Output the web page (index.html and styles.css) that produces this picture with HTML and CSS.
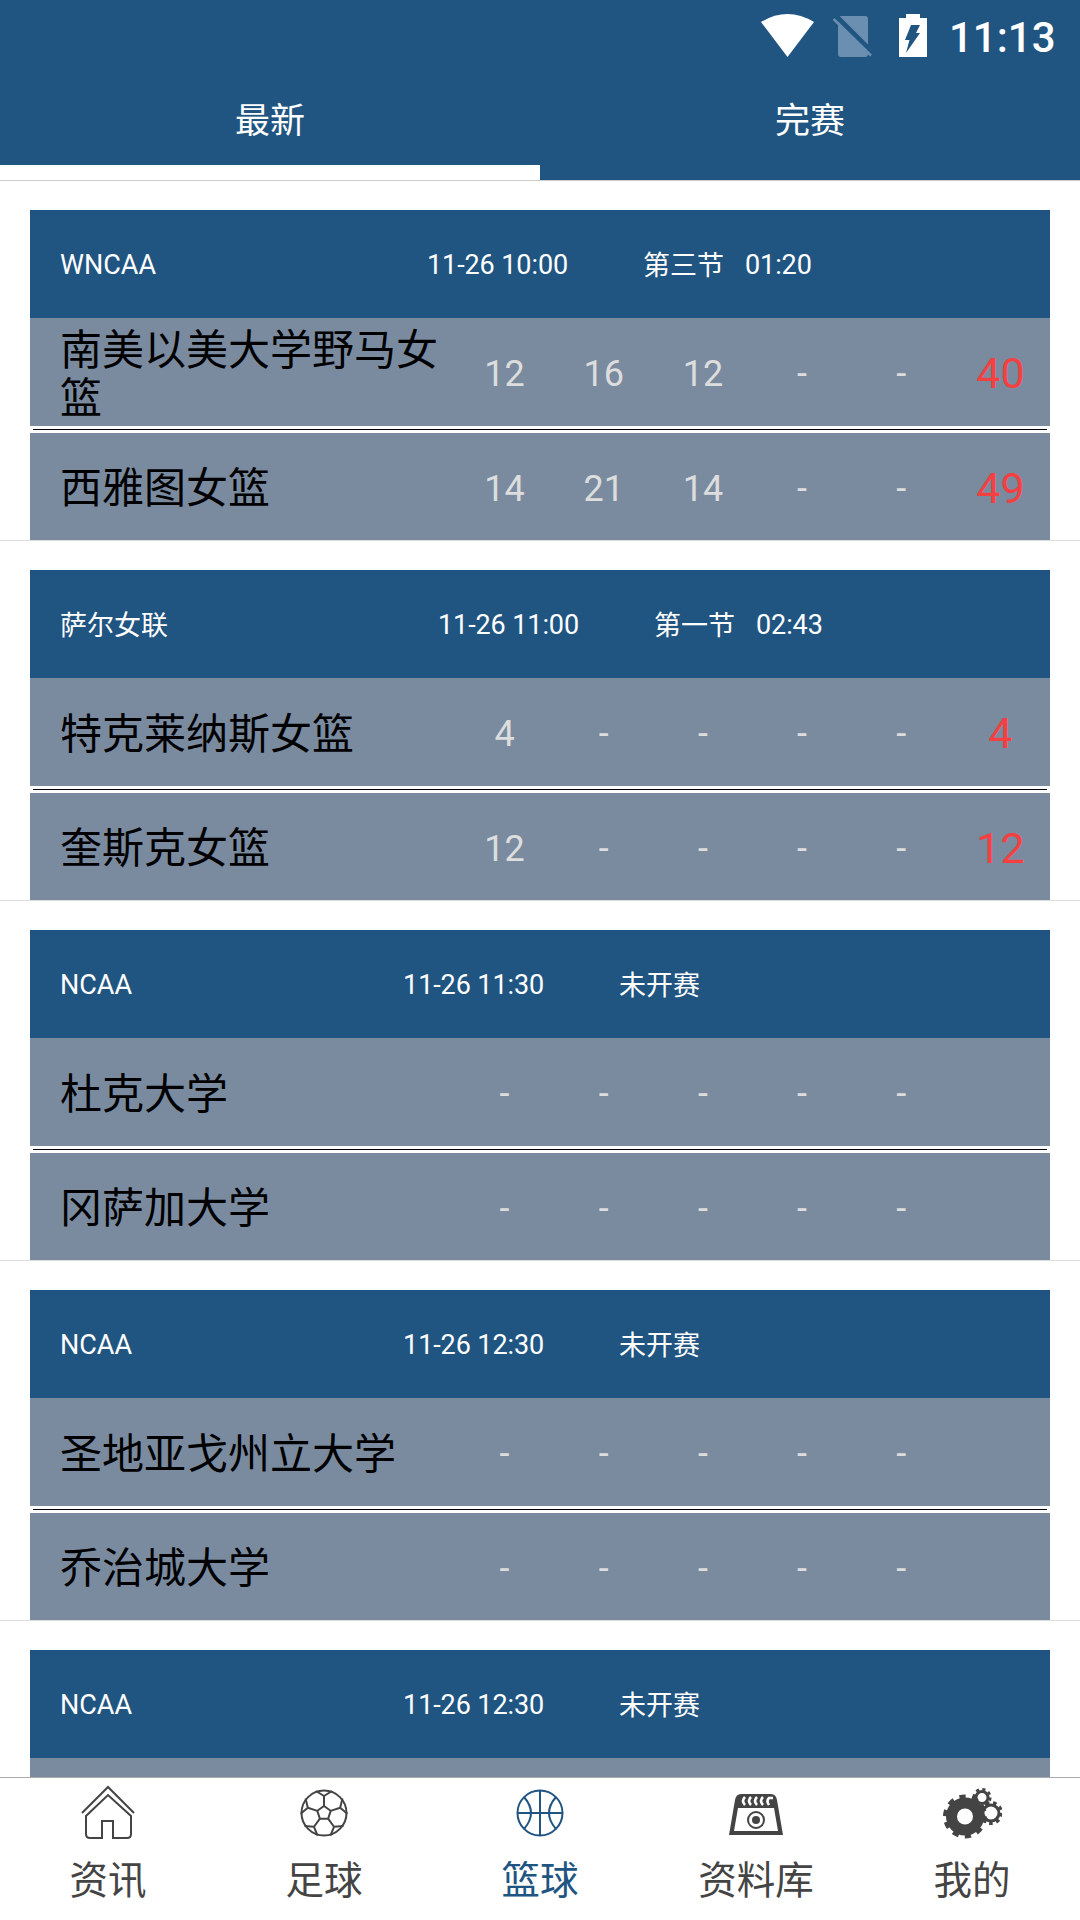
FILE: index.html
```html
<!DOCTYPE html>
<html lang="zh">
<head>
<meta charset="utf-8">
<title>篮球</title>
<link rel="stylesheet" href="styles.css">
</head>
<body>
<div class="page">
  <header class="top">
    <div class="status">
      <svg class="ic-wifi" width="53" height="43" viewBox="0 0 53 43"><path d="M0 8Q26.500-8 53 8L26.500 43Z" fill="#fff"/></svg>
      <svg class="ic-sim" width="39" height="41" viewBox="0 0 39 41"><path d="M5 3Q5 0 8 0H32Q35 0 35 3V38Q35 41 32 41H8Q5 41 5 38Z" fill="#6a8fb0"/><path d="M4 1L39 36" stroke="#215581" stroke-width="5"/><path d="M0.500 3L38 39.500" stroke="#6a8fb0" stroke-width="2.500"/></svg>
      <svg class="ic-bat" width="28" height="43" viewBox="0 0 28 43"><path d="M7 0H21V4H28V43H0V4H7Z" fill="#fff"/><path d="M12 11H21L17 19H21L7 39L10.500 26H6Z" fill="#215581"/></svg>
      <span class="clock">11:13</span>
    </div>
    <nav class="tabs">
      <div class="tab tab-on">最新</div>
      <div class="tab">完赛</div>
    </nav>
  </header>

  <main class="list">
    <section class="item">
      <div class="head"><span class="league">WNCAA</span><span class="time">11-26 10:00</span><span class="phase">第三节</span><span class="clk">01:20</span></div>
      <div class="row"><div class="team">南美以美大学野马女篮</div><span>12</span><span>16</span><span>12</span><span>-</span><span>-</span><span class="total">40</span></div>
      <div class="sep"></div>
      <div class="row row-b"><div class="team">西雅图女篮</div><span>14</span><span>21</span><span>14</span><span>-</span><span>-</span><span class="total">49</span></div>
    </section>
    <section class="item">
      <div class="head"><span class="league league-cjk">萨尔女联</span><span class="time">11-26 11:00</span><span class="phase">第一节</span><span class="clk">02:43</span></div>
      <div class="row"><div class="team">特克莱纳斯女篮</div><span>4</span><span>-</span><span>-</span><span>-</span><span>-</span><span class="total">4</span></div>
      <div class="sep"></div>
      <div class="row row-b"><div class="team">奎斯克女篮</div><span>12</span><span>-</span><span>-</span><span>-</span><span>-</span><span class="total">12</span></div>
    </section>
    <section class="item">
      <div class="head"><span class="league">NCAA</span><span class="time">11-26 11:30</span><span class="phase">未开赛</span></div>
      <div class="row"><div class="team">杜克大学</div><span>-</span><span>-</span><span>-</span><span>-</span><span>-</span><span class="total"></span></div>
      <div class="sep"></div>
      <div class="row row-b"><div class="team">冈萨加大学</div><span>-</span><span>-</span><span>-</span><span>-</span><span>-</span><span class="total"></span></div>
    </section>
    <section class="item">
      <div class="head"><span class="league">NCAA</span><span class="time">11-26 12:30</span><span class="phase">未开赛</span></div>
      <div class="row"><div class="team">圣地亚戈州立大学</div><span>-</span><span>-</span><span>-</span><span>-</span><span>-</span><span class="total"></span></div>
      <div class="sep"></div>
      <div class="row row-b"><div class="team">乔治城大学</div><span>-</span><span>-</span><span>-</span><span>-</span><span>-</span><span class="total"></span></div>
    </section>
    <section class="item">
      <div class="head"><span class="league">NCAA</span><span class="time">11-26 12:30</span><span class="phase">未开赛</span></div>
      <div class="row"></div>
    </section>
  </main>

  <footer class="bar">
    <div class="nav">
      <svg class="ico" viewBox="0 0 60 60"><path d="M4 30L30 4L56 30M8 33V51Q8 55 12 55H24V38H35V55H49Q53 55 53 51V33L30 12Z" fill="none" stroke="#444" stroke-width="2"/></svg>
      <span>资讯</span>
    </div>
    <div class="nav">
      <svg class="ico" viewBox="0 0 60 60">
        <defs><path id="spoke" d="M30 23V13M30 13L22 8M30 13L38 8" fill="none" stroke="#444" stroke-width="2"/></defs>
        <circle cx="30" cy="30" r="22.500" fill="none" stroke="#444" stroke-width="2"/>
        <path d="M30 23L36.700 27.800L34.100 35.700H25.900L23.300 27.800Z" fill="none" stroke="#444" stroke-width="2"/>
        <use href="#spoke"/><use href="#spoke" transform="rotate(72 30 30)"/><use href="#spoke" transform="rotate(144 30 30)"/><use href="#spoke" transform="rotate(216 30 30)"/><use href="#spoke" transform="rotate(288 30 30)"/>
      </svg>
      <span>足球</span>
    </div>
    <div class="nav nav-on">
      <svg class="ico" viewBox="0 0 60 60"><g fill="none" stroke="#215581" stroke-width="2"><circle cx="30" cy="30" r="22.500"/><path d="M30 7.500V52.500M7.500 30H52.500M14 14Q28 30 14 46M46 14Q32 30 46 46"/></g></svg>
      <span>篮球</span>
    </div>
    <div class="nav">
      <svg class="ico" viewBox="0 0 60 60">
        <path d="M3 52L9 17Q10 11 15 11H45Q50 11 51 17L57 52Z" fill="#444"/>
        <path d="M8 48L12 25H48L52 48Z" fill="#fff"/>
        <path d="M19 14Q15 18 19 22M25 14Q21 18 25 22M31 14Q27 18 31 22M37 14Q33 18 37 22M47 15H43Q40 18 43 22" fill="none" stroke="#fff" stroke-width="2.600"/>
        <circle cx="30" cy="37" r="8" fill="none" stroke="#444" stroke-width="2"/>
        <circle cx="30" cy="37" r="4" fill="#444"/>
      </svg>
      <span>资料库</span>
    </div>
    <div class="nav">
      <svg class="ico" viewBox="0 0 60 60"><g fill="none" stroke="#444">
        <circle cx="23" cy="33.500" r="13.500" stroke-width="11"/>
        <circle cx="23" cy="33.500" r="19.500" stroke-width="5" stroke-dasharray="6.130 6.130"/>
        <circle cx="49" cy="30" r="8" stroke-width="3"/>
        <circle cx="49" cy="30" r="10.500" stroke-width="3" stroke-dasharray="3.660 3.660"/>
        <circle cx="40" cy="14.500" r="6" stroke-width="3"/>
        <circle cx="40" cy="14.500" r="8.300" stroke-width="2.500" stroke-dasharray="3.260 3.260"/>
      </g></svg>
      <span>我的</span>
    </div>
  </footer>
</div>
</body>
</html>
```

FILE: styles.css
```css
* { box-sizing: border-box; margin: 0; padding: 0; }
html, body { background: #fff; }
body { font-family: Roboto, "Noto Sans CJK SC", sans-serif; }

.page {
  width: 1080px;
  height: 1920px;
  display: flex;
  flex-direction: column;
  overflow: hidden;
}

.top {
  height: 180px;
  flex: none;
  background: #215581;
  color: #fff;
  display: flex;
  flex-direction: column;
}

.status {
  height: 72px;
  flex: none;
  display: flex;
  align-items: flex-start;
  padding-top: 14px;
  padding-left: 761px;
}
.ic-sim { margin-left: 19px; margin-top: 2px; }
.ic-bat { margin-left: 27px; }
.clock { margin-left: 22px; font-size: 42px; font-weight: 500; line-height: 48px; }

.tabs { flex: 1; display: flex; }
.tab {
  flex: 1;
  text-align: center;
  font-family: "Noto Sans CJK SC", sans-serif;
  font-size: 35px;
  padding-top: 22px;
  line-height: 48px;
  border-bottom: 15px solid transparent;
}
.tab-on { border-bottom-color: #fff; }

.list {
  flex: 1;
  min-height: 0;
  overflow: hidden;
  border-top: 1px solid #ccc;
}

.item {
  padding: 29px 30px 0;
  height: 360px;
  border-bottom: 1px solid #ddd;
}

.head {
  height: 108px;
  background: #215581;
  color: #fff;
  display: flex;
  align-items: center;
  padding-left: 30px;
  padding-top: 1px;
  font-size: 27px;
  line-height: 38px;
}
.league-cjk {
  font-family: "Noto Sans CJK SC", sans-serif;
  margin-right: -1px;
  margin-bottom: 2px;
}
.time { margin-left: 271px; letter-spacing: -0.1px; }
.phase {
  margin-left: 75px;
  margin-bottom: 2px;
  font-family: "Noto Sans CJK SC", sans-serif;
}
.clk { margin-left: 21px; letter-spacing: -0.1px; }

.row {
  height: 108px;
  background: #7a8ba0;
  display: grid;
  grid-template-columns: 395px repeat(6, 1fr);
  align-items: center;
  justify-items: center;
  padding-left: 30px;
  padding-top: 3px;
  color: #ddd;
  font-size: 36px;
}
.row-b { height: 107px; padding-top: 4px; }

.team {
  justify-self: start;
  font-family: "Noto Sans CJK SC", sans-serif;
  color: #000;
  font-size: 42px;
  line-height: 48px;
  margin-bottom: 6px;
}
.row-b .team { margin-bottom: 7px; }
.total { color: #f44040; font-size: 43px; margin-bottom: 2px; }

.sep {
  height: 7px;
  padding: 3px 3px;
}
.sep::before {
  content: "";
  display: block;
  height: 1px;
  background: #000;
}

.bar {
  height: 143px;
  flex: none;
  display: flex;
  background: #fff;
  border-top: 1px solid #aaa;
}
.nav {
  flex: 1;
  display: flex;
  flex-direction: column;
  align-items: center;
  padding-top: 5px;
  color: #444;
  font-family: "Noto Sans CJK SC", sans-serif;
  font-size: 38.5px;
  line-height: 48px;
}
.nav-on { color: #215581; }
.ico { width: 60px; height: 60px; display: block; margin-bottom: 10px; }
```
